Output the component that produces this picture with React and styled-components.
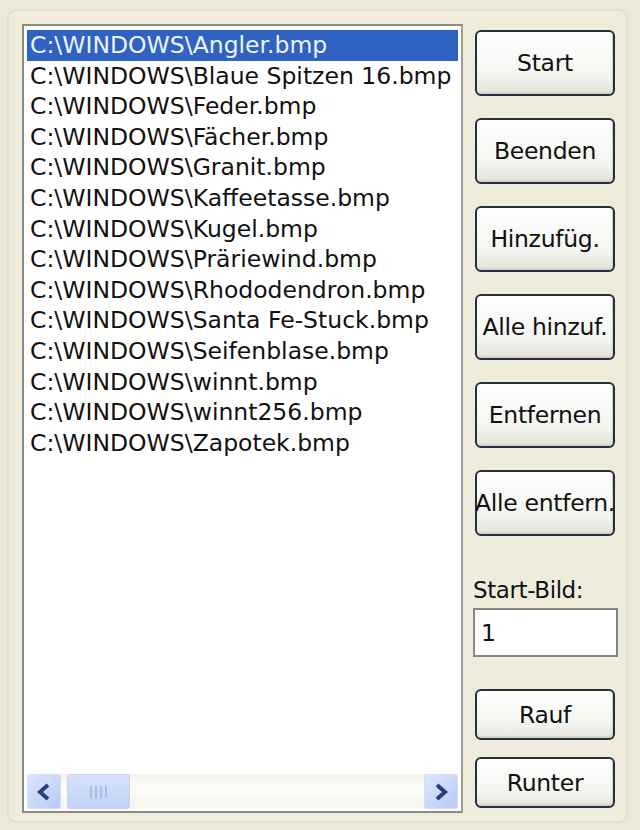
import styled, { createGlobalStyle } from "styled-components";

const Global = createGlobalStyle`
  html, body {
    margin: 0;
    padding: 0;
    background: #ece9d8;
  }
  body {
    font-family: "DejaVu Sans", "Liberation Sans", sans-serif;
  }
`

const Window = styled.div`
  width: 640px;
  height: 830px;
  box-sizing: border-box;
  padding: 9px 12px 7px 7px;
  background: #ece9d8;
`

const Frame = styled.div`
  height: 100%;
  box-sizing: border-box;
  border: 2px solid #e2dfcd;
  border-radius: 9px;
  padding: 13px 10px 8px 13px;
  display: flex;
  gap: 12px;
  background: #efecdc;
`

const ListBox = styled.div`
  width: 441px;
  flex: none;
  box-sizing: border-box;
  border: 2px solid #8a8a86;
  border-right-color: #9c9c98;
  background: #fff;
  padding: 4px 3px 2px 3px;
  display: flex;
  flex-direction: column;
`

const Rows = styled.div`
  flex: 1;
  overflow: hidden;
`

const Row = styled.div`
  height: 30.6px;
  line-height: 30.6px;
  padding-left: 3px;
  font-size: 23.5px;
  white-space: nowrap;
  color: ${p => (p.$selected ? "#eef4ff" : "#111")};
  background: ${p => (p.$selected ? "#2f62c2" : "transparent")};
`

const HScroll = styled.div`
  height: 35px;
  display: flex;
  align-items: stretch;
  background: linear-gradient(#f3f1ea, #fdfdfa 40%, #f6f5ef);
`

const ArrowBtn = styled.div`
  width: 34px;
  box-sizing: border-box;
  border: 1px solid #d3def7;
  border-radius: 3px;
  background: linear-gradient(135deg, #dbe5fc, #b9cbf6);
  display: flex;
  align-items: center;
  justify-content: center;
`

const Thumb = styled.div`
  width: 63px;
  margin-left: 6px;
  box-sizing: border-box;
  border: 1px solid #c4d2f0;
  border-radius: 3px;
  background: linear-gradient(#d6e1fb, #c2d2f7);
  display: flex;
  align-items: center;
  justify-content: center;
  gap: 3px;
`

const Grip = styled.span`
  width: 2px;
  height: 12px;
  background: #a9bbe6;
`

const Track = styled.div`
  flex: 1;
`

const Side = styled.div`
  width: 143px;
  display: flex;
  flex-direction: column;
  padding-top: 6px;
`

const Button = styled.div`
  width: 140px;
  height: ${p => p.$h || 66}px;
  margin-bottom: ${p => p.$gap ?? 22}px;
  box-sizing: border-box;
  border: 2px solid #23313f;
  border-radius: 6px;
  background: linear-gradient(#ffffff, #f4f4f0 70%, #e4e2da);
  box-shadow: inset -1px -2px 0 #d6d3c6;
  display: flex;
  align-items: center;
  justify-content: center;
  font-size: 23.5px;
  letter-spacing: -0.3px;
  color: #111;
  white-space: nowrap;
`

const Label = styled.div`
  font-size: 23px;
  letter-spacing: -0.4px;
  color: #111;
  margin: 41px 0 5px -2px;
`

const Input = styled.div`
  width: 145px;
  height: 49px;
  margin-left: -2px;
  box-sizing: border-box;
  border: 2px solid #868682;
  background: #fff;
  padding-left: 6px;
  display: flex;
  align-items: center;
  font-size: 23.5px;
  color: #111;
  margin-bottom: 32px;
`

const files = [
  "Angler.bmp",
  "Blaue Spitzen 16.bmp",
  "Feder.bmp",
  "Fächer.bmp",
  "Granit.bmp",
  "Kaffeetasse.bmp",
  "Kugel.bmp",
  "Präriewind.bmp",
  "Rhododendron.bmp",
  "Santa Fe-Stuck.bmp",
  "Seifenblase.bmp",
  "winnt.bmp",
  "winnt256.bmp",
  "Zapotek.bmp",
];

const Chevron = ({ dir }) => (
  <svg width="16" height="20" viewBox="0 0 16 20">
    <path
      d={dir === "left" ? "M12 3 L4 10 L12 17" : "M4 3 L12 10 L4 17"}
      fill="none"
      stroke="#2c3e78"
      strokeWidth="4"
    />
  </svg>
);

function App() {
  return (
    <Window>
      <Global />
      <Frame>
        <ListBox>
          <Rows>
            {files.map((f, i) => (
              <Row key={f} $selected={i === 0}>
                C:\WINDOWS\{f}
              </Row>
            ))}
          </Rows>
          <HScroll>
            <ArrowBtn>
              <Chevron dir="left" />
            </ArrowBtn>
            <Thumb>
              <Grip />
              <Grip />
              <Grip />
              <Grip />
            </Thumb>
            <Track />
            <ArrowBtn>
              <Chevron dir="right" />
            </ArrowBtn>
          </HScroll>
        </ListBox>
        <Side>
          <Button>Start</Button>
          <Button>Beenden</Button>
          <Button>Hinzufüg.</Button>
          <Button>Alle hinzuf.</Button>
          <Button>Entfernen</Button>
          <Button $gap={0}>Alle entfern.</Button>
          <Label>Start-Bild:</Label>
          <Input>1</Input>
          <Button $h={51} $gap={17}>Rauf</Button>
          <Button $h={51} $gap={0}>Runter</Button>
        </Side>
      </Frame>
    </Window>
  );
}

export default App;
